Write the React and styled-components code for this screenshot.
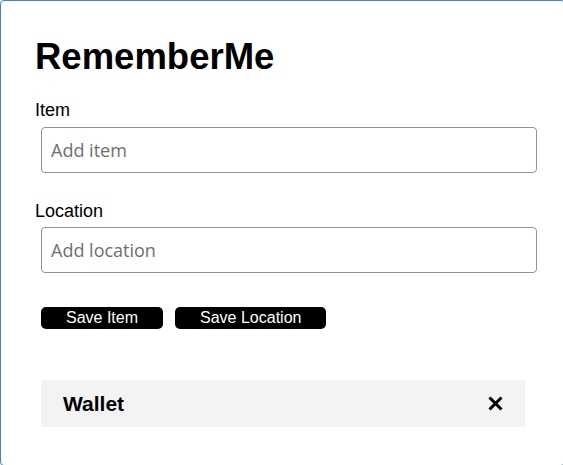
import { useState } from "react";
import styled, { createGlobalStyle } from "styled-components";

const GlobalStyle = createGlobalStyle`
  html, body {
    margin: 0;
    overflow: hidden;
    background: #fff;
    font-family: "Liberation Sans", Arial, sans-serif;
  }
`;

const Frame = styled.div`
  width: 565px;
  height: 466px;
  box-sizing: border-box;
  border: 1px solid #3f86c6;
  border-radius: 4px;
  padding: 35px 0 0 34px;
  display: flex;
  flex-direction: column;
  overflow: hidden;
`;

const Title = styled.h1`
  margin: 0;
  font-size: 36.5px;
  line-height: 42px;
  font-weight: bold;
  color: #000;
`;

const Label = styled.label`
  display: block;
  margin-top: ${(p) => p.$top}px;
  font-size: 18px;
  line-height: 20px;
  color: #000;
`;

const Input = styled.input`
  display: block;
  box-sizing: border-box;
  width: 496px;
  height: 46px;
  margin: ${(p) => p.$top}px 0 0 6px;
  padding: 0 9px;
  border: 1px solid #8f8f9d;
  border-radius: 4px;
  font-family: "Open Sans", sans-serif;
  font-size: 18px;
  color: #000;
  outline: none;

  &::placeholder {
    color: #6f6f6f;
  }
`;

const ButtonRow = styled.div`
  display: flex;
  gap: 12px;
  margin: 34px 0 0 6px;
`;

const Button = styled.button`
  height: 22px;
  padding: 0 25px;
  border: none;
  border-radius: 5px;
  background: #000;
  color: #fff;
  font-family: "Liberation Sans", Arial, sans-serif;
  font-size: 16px;
  line-height: 22px;
  cursor: pointer;
`;

const List = styled.ul`
  list-style: none;
  margin: 51px 0 0 6px;
  padding: 0;
`;

const ListItem = styled.li`
  width: 484px;
  height: 47px;
  box-sizing: border-box;
  display: flex;
  align-items: center;
  justify-content: space-between;
  padding: 0 22px;
  background: #f3f3f3;
`;

const ItemName = styled.span`
  font-size: 21px;
  font-weight: bold;
  color: #000;
`;

const RemoveButton = styled.button`
  display: flex;
  align-items: center;
  justify-content: center;
  width: 15px;
  height: 15px;
  padding: 0;
  border: none;
  background: none;
  cursor: pointer;
`;

const CloseIcon = () => (
  <svg width="15" height="15" viewBox="0 0 15 15">
    <path d="M1.5 1.5 L13.5 13.5 M13.5 1.5 L1.5 13.5" stroke="#000" strokeWidth="3" fill="none" />
  </svg>
);

const App = () => {
  const [item, setItem] = useState("");
  const [location, setLocation] = useState("");
  const [items, setItems] = useState(["Wallet"]);

  return (
    <Frame>
      <GlobalStyle />
      <Title>RememberMe</Title>
      <Label $top={22} htmlFor="item">Item</Label>
      <Input
        id="item"
        $top={7}
        placeholder="Add item"
        value={item}
        onChange={(e) => setItem(e.target.value)}
      />
      <Label $top={28} htmlFor="location">Location</Label>
      <Input
        id="location"
        $top={6}
        placeholder="Add location"
        value={location}
        onChange={(e) => setLocation(e.target.value)}
      />
      <ButtonRow>
        <Button
          onClick={() => {
            if (item) setItems([...items, item]);
            setItem("");
          }}
        >
          Save Item
        </Button>
        <Button onClick={() => setLocation("")}>Save Location</Button>
      </ButtonRow>
      <List>
        {items.map((name, i) => (
          <ListItem key={i}>
            <ItemName>{name}</ItemName>
            <RemoveButton onClick={() => setItems(items.filter((_, j) => j !== i))}>
              <CloseIcon />
            </RemoveButton>
          </ListItem>
        ))}
      </List>
    </Frame>
  );
};

export default App;
